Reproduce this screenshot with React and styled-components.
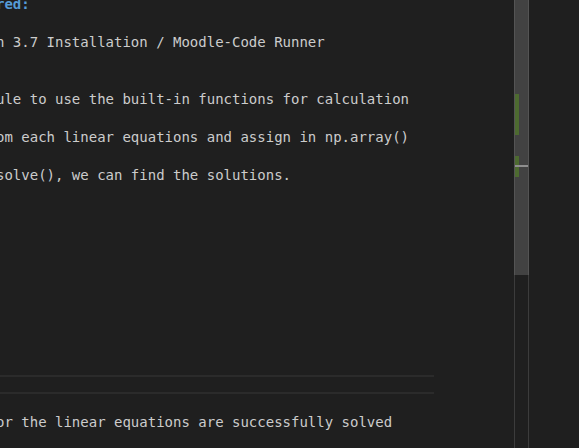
import React from "react";
import styled, { createGlobalStyle } from "styled-components";

const Global = createGlobalStyle`
  html, body { margin: 0; padding: 0; background: #1f1f1f; }
  #root { width: 579px; height: 448px; }
`;

const Frame = styled.div`
  width: 579px;
  height: 448px;
  background: #1f1f1f;
  display: flex;
  overflow: hidden;
  font-family: "DejaVu Sans Mono", "Liberation Mono", monospace;
  font-size: 14px;
  line-height: 19px;
  color: #cccccc;
`;

const Notebook = styled.div`
  width: 514px;
  flex: none;
  display: flex;
  flex-direction: column;
  overflow: hidden;
`;

const Editor = styled.div`
  height: 380px;
  flex: none;
  margin: -5px 0 0 -4px;
  display: flex;
  flex-direction: column;
`;

const Line = styled.div`
  height: 19px;
  white-space: pre;
  color: ${(p) => (p.$heading ? "#569cd6" : "#cccccc")};
  font-weight: ${(p) => (p.$heading ? 700 : 400)};
`;

const Divider = styled.div`
  width: 434px;
  height: 2px;
  background: #2b2b2b;
  flex: none;
`;

const Gap = styled.div`
  height: 15px;
  flex: none;
`;

const Output = styled.div`
  padding-top: 19px;
  margin-left: -4px;
  white-space: pre;
  color: #cccccc;
`;

const Ruler = styled.div`
  position: relative;
  width: 15px;
  flex: none;
  box-sizing: border-box;
  border-left: 1px solid #3c3c3c;
  border-right: 1px solid #3c3c3c;
  height: 448px;
`;

const Thumb = styled.div`
  position: absolute;
  left: -1px;
  right: -1px;
  top: 0;
  height: 275px;
  background: rgba(121, 121, 121, 0.4);
`;

const Mark = styled.div`
  position: absolute;
  left: 0;
  width: 4px;
  background: #4d6a30;
`;

const Cursor = styled.div`
  position: absolute;
  left: 0;
  right: 0;
  top: 165px;
  height: 2px;
  background: #8f8f8f;
`;

const Side = styled.div`
  flex: 1;
  background: #1f1f1f;
`;

const lines = [
  { t: "red:", h: true },
  { t: "" },
  { t: "n 3.7 Installation / Moodle-Code Runner" },
  { t: "" },
  { t: "" },
  { t: "ule to use the built-in functions for calculation" },
  { t: "" },
  { t: "om each linear equations and assign in np.array()" },
  { t: "" },
  { t: "solve(), we can find the solutions." },
];

export default function App() {
  return (
    <>
      <Global />
      <Frame>
        <Notebook>
          <Editor>
            {lines.map((l, i) => (
              <Line key={i} $heading={l.h}>
                {l.t}
              </Line>
            ))}
          </Editor>
          <Divider />
          <Gap />
          <Divider />
          <Output>or the linear equations are successfully solved</Output>
        </Notebook>
        <Ruler>
          <Thumb />
          <Mark style={{ top: 94, height: 41 }} />
          <Mark style={{ top: 156, height: 21 }} />
          <Cursor />
        </Ruler>
        <Side />
      </Frame>
    </>
  );
}
